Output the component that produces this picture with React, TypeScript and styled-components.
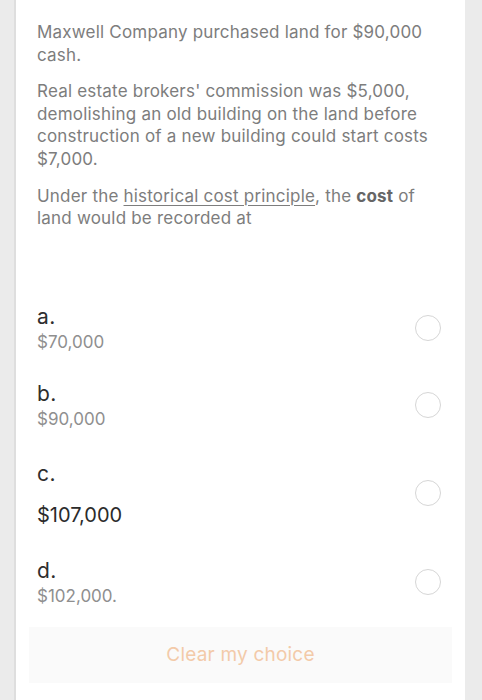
import React from 'react';
import styled, { createGlobalStyle } from 'styled-components';

const GlobalStyle = createGlobalStyle`
  html, body {
    margin: 0;
    padding: 0;
    background: #ebebeb;
  }
  body {
    font-family: Inter, "Liberation Sans", Arial, sans-serif;
  }
`;

const Page = styled.div`
  display: flex;
  padding: 0 17px 0 14px;
  min-height: 700px;
  box-sizing: border-box;
`;

const Card = styled.div`
  flex: 1;
  background: #ffffff;
  border-left: 2px solid #dedede;
  padding: 21px 24px 16px 21px;
`;

const Question = styled.div`
  color: #7d7d7d;
  font-size: 17px;
  line-height: 22.6px;
  letter-spacing: 0.2px;

  p {
    margin: 0 0 14px;
  }
`;

const Term = styled.span`
  text-decoration: underline;
  text-underline-offset: 3px;
  text-decoration-thickness: 1px;
`;

const Strong = styled.b`
  color: #666666;
  font-weight: 700;
`;

const Options = styled.div`
  margin-top: 75px;
  display: flex;
  flex-direction: column;
`;

const Option = styled.label<{ $gap: number }>`
  display: flex;
  align-items: center;
  justify-content: space-between;
  margin-bottom: ${(p) => p.$gap}px;
`;

const OptionText = styled.div`
  display: flex;
  flex-direction: column;
`;

const Letter = styled.span`
  color: #2e2e2e;
  font-size: 21px;
  line-height: 24px;
  letter-spacing: 0.5px;
`;

const Answer = styled.span<{ $big?: boolean }>`
  color: ${(p) => (p.$big ? '#2b2b2b' : '#8f8f8f')};
  font-size: ${(p) => (p.$big ? 20 : 17)}px;
  line-height: 24px;
  margin-top: ${(p) => (p.$big ? 17 : 1)}px;
`;

const Radio = styled.span`
  width: 24px;
  height: 24px;
  border-radius: 50%;
  border: 1.5px solid #d6d6d6;
  flex-shrink: 0;
  margin-top: -3px;
`;

const ClearButton = styled.button`
  display: block;
  width: calc(100% + 19px);
  margin: 0 0 0 -8px;
  height: 56px;
  padding: 0;
  border: none;
  background: #fafafa;
  color: #f3caa9;
  font-family: Inter, "Liberation Sans", Arial, sans-serif;
  font-size: 19px;
  letter-spacing: 0.2px;
`;

const options = [
  { letter: 'a.', text: '$70,000', gap: 28 },
  { letter: 'b.', text: '$90,000', gap: 31 },
  { letter: 'c.', text: '$107,000', big: true, gap: 32 },
  { letter: 'd.', text: '$102,000.', gap: 19 },
];

const App: React.FC = () => {
  return (
    <Page>
      <GlobalStyle />
      <Card>
        <Question>
          <p>Maxwell Company purchased land for $90,000 cash.</p>
          <p>
            Real estate brokers' commission was $5,000, demolishing an old building on the land
            before construction of a new building could start costs $7,000.
          </p>
          <p>
            Under the <Term>historical cost principle</Term>, the <Strong>cost</Strong> of land
            would be recorded at
          </p>
        </Question>
        <Options>
          {options.map((o) => (
            <Option key={o.letter} $gap={o.gap}>
              <OptionText>
                <Letter>{o.letter}</Letter>
                <Answer $big={o.big}>{o.text}</Answer>
              </OptionText>
              <Radio />
            </Option>
          ))}
        </Options>
        <ClearButton>Clear my choice</ClearButton>
      </Card>
    </Page>
  );
};

export default App;
